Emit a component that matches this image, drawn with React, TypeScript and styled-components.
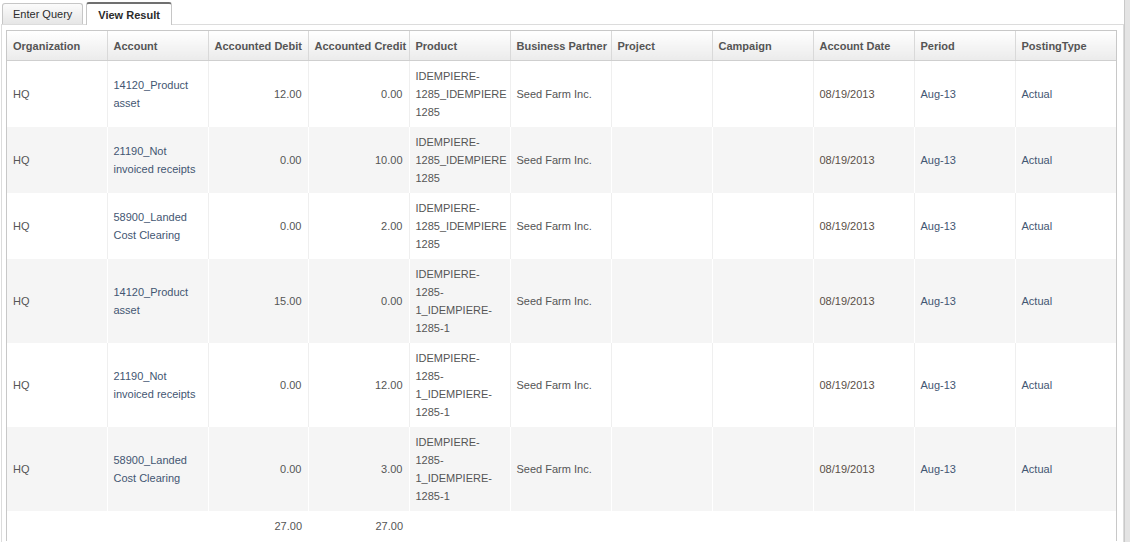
import styled, { createGlobalStyle } from "styled-components";

const GlobalStyle = createGlobalStyle`
  html, body {
    margin: 0;
    padding: 0;
    background: #fff;
  }
  body {
    font-family: "Liberation Sans", Arial, sans-serif;
    font-size: 11px;
  }
`;

type Tone = "plain" | "lookup" | "date";

type Line = {
  org: string;
  account: string;
  debit: string;
  credit: string;
  product: string;
  partner: string;
  date: string;
  period: string;
  posting: string;
};

const headers = [
  "Organization",
  "Account",
  "Accounted Debit",
  "Accounted Credit",
  "Product",
  "Business Partner",
  "Project",
  "Campaign",
  "Account Date",
  "Period",
  "PostingType",
];

// column widths, border included
const colWidths = [100, 101, 100, 101, 101, 101, 101, 101, 101, 101, 101];

const lines: Line[] = [
  { org: "HQ", account: "14120_Product asset", debit: "12.00", credit: "0.00", product: "IDEMPIERE-1285_IDEMPIERE 1285", partner: "Seed Farm Inc.", date: "08/19/2013", period: "Aug-13", posting: "Actual" },
  { org: "HQ", account: "21190_Not invoiced receipts", debit: "0.00", credit: "10.00", product: "IDEMPIERE-1285_IDEMPIERE 1285", partner: "Seed Farm Inc.", date: "08/19/2013", period: "Aug-13", posting: "Actual" },
  { org: "HQ", account: "58900_Landed Cost Clearing", debit: "0.00", credit: "2.00", product: "IDEMPIERE-1285_IDEMPIERE 1285", partner: "Seed Farm Inc.", date: "08/19/2013", period: "Aug-13", posting: "Actual" },
  { org: "HQ", account: "14120_Product asset", debit: "15.00", credit: "0.00", product: "IDEMPIERE-1285-1_IDEMPIERE-1285-1", partner: "Seed Farm Inc.", date: "08/19/2013", period: "Aug-13", posting: "Actual" },
  { org: "HQ", account: "21190_Not invoiced receipts", debit: "0.00", credit: "12.00", product: "IDEMPIERE-1285-1_IDEMPIERE-1285-1", partner: "Seed Farm Inc.", date: "08/19/2013", period: "Aug-13", posting: "Actual" },
  { org: "HQ", account: "58900_Landed Cost Clearing", debit: "0.00", credit: "3.00", product: "IDEMPIERE-1285-1_IDEMPIERE-1285-1", partner: "Seed Farm Inc.", date: "08/19/2013", period: "Aug-13", posting: "Actual" },
];

const Screen = styled.div`
  display: flex;
  height: 542px;
  overflow: hidden;
`;

const Main = styled.div`
  flex: 1;
  min-width: 0;
  display: flex;
  flex-direction: column;
`;

const ScrollEdge = styled.div`
  width: 5px;
  border-left: 1px solid #c9c9c9;
  background: #e4e4e4;
`;

const TabBar = styled.div`
  height: 24px;
  display: flex;
  align-items: flex-end;
  gap: 3px;
  padding-left: 2px;
`;

const Tab = styled.div<{ $active?: boolean }>`
  box-sizing: border-box;
  display: flex;
  align-items: center;
  height: ${(p) => (p.$active ? "23px" : "21px")};
  padding: 0 ${(p) => (p.$active ? "11px" : "10px")};
  margin-bottom: ${(p) => (p.$active ? "-1px" : "0")};
  border: 1px solid #c6c6c6;
  border-top: ${(p) => (p.$active ? "2px solid #707070" : "1px solid #c6c6c6")};
  border-bottom: none;
  border-radius: 3px 3px 0 0;
  background: ${(p) => (p.$active ? "#fff" : "linear-gradient(#fbfbfb, #e6e6e6)")};
  color: #2b2b2b;
  font-weight: ${(p) => (p.$active ? "bold" : "normal")};
  position: relative;
  z-index: 1;
  white-space: nowrap;
`;

const Panel = styled.div`
  flex: 1;
  margin-left: 1px;
  border: 1px solid #dcdcdc;
  border-bottom: none;
  padding: 5px 6px 0 4px;
`;

const GridFrame = styled.div`
  border: 1px solid #c8c8c8;
  border-bottom: none;
`;

const Table = styled.table`
  width: 100%;
  border-collapse: collapse;
  table-layout: fixed;
`;

const HeadCell = styled.th`
  height: 29px;
  padding: 0 6px;
  text-align: left;
  font-weight: bold;
  color: #555;
  white-space: nowrap;
  background: linear-gradient(#fff, #ebebeb);
  border-bottom: 1px solid #cfcfcf;
  border-left: 1px solid #d9d9d9;
  &:first-child {
    border-left: none;
  }
`;

const Row = styled.tr<{ $zebra: boolean }>`
  background: ${(p) => (p.$zebra ? "#f5f5f5" : "#fff")};
  & > td {
    border-left: 1px solid ${(p) => (p.$zebra ? "#fff" : "#efefef")};
  }
  & > td:first-child {
    border-left: none;
  }
`;

const toneColor: Record<Tone, string> = {
  plain: "#555",
  lookup: "#435672",
  date: "#5a5048",
};

const Cell = styled.td<{ $align?: "left" | "right"; $tone?: Tone }>`
  padding: 6px;
  line-height: 18px;
  vertical-align: middle;
  text-align: ${(p) => p.$align ?? "left"};
  color: ${(p) => toneColor[p.$tone ?? "plain"]};
`;

const FootRow = styled.tr`
  background: #fff;
`;

const FootCell = styled.td<{ $align?: "left" | "right" }>`
  padding: 6px;
  line-height: 18px;
  text-align: ${(p) => p.$align ?? "left"};
  color: #555;
`;

export default function App() {
  return (
    <>
      <GlobalStyle />
      <Screen>
        <Main>
          <TabBar>
            <Tab>Enter Query</Tab>
            <Tab $active>View Result</Tab>
          </TabBar>
          <Panel>
            <GridFrame>
              <Table>
                <colgroup>
                  {colWidths.map((w, i) => (
                    <col key={i} style={{ width: w }} />
                  ))}
                </colgroup>
                <thead>
                  <tr>
                    {headers.map((h) => (
                      <HeadCell key={h}>{h}</HeadCell>
                    ))}
                  </tr>
                </thead>
                <tbody>
                  {lines.map((l, i) => (
                    <Row key={i} $zebra={i % 2 === 1}>
                      <Cell>{l.org}</Cell>
                      <Cell $tone="lookup">{l.account}</Cell>
                      <Cell $align="right">{l.debit}</Cell>
                      <Cell $align="right">{l.credit}</Cell>
                      <Cell>{l.product}</Cell>
                      <Cell>{l.partner}</Cell>
                      <Cell></Cell>
                      <Cell></Cell>
                      <Cell $tone="date">{l.date}</Cell>
                      <Cell $tone="lookup">{l.period}</Cell>
                      <Cell $tone="lookup">{l.posting}</Cell>
                    </Row>
                  ))}
                  <FootRow>
                    <FootCell></FootCell>
                    <FootCell></FootCell>
                    <FootCell $align="right">27.00</FootCell>
                    <FootCell $align="right">27.00</FootCell>
                    <FootCell></FootCell>
                    <FootCell></FootCell>
                    <FootCell></FootCell>
                    <FootCell></FootCell>
                    <FootCell></FootCell>
                    <FootCell></FootCell>
                    <FootCell></FootCell>
                  </FootRow>
                </tbody>
              </Table>
            </GridFrame>
          </Panel>
        </Main>
        <ScrollEdge />
      </Screen>
    </>
  );
}
